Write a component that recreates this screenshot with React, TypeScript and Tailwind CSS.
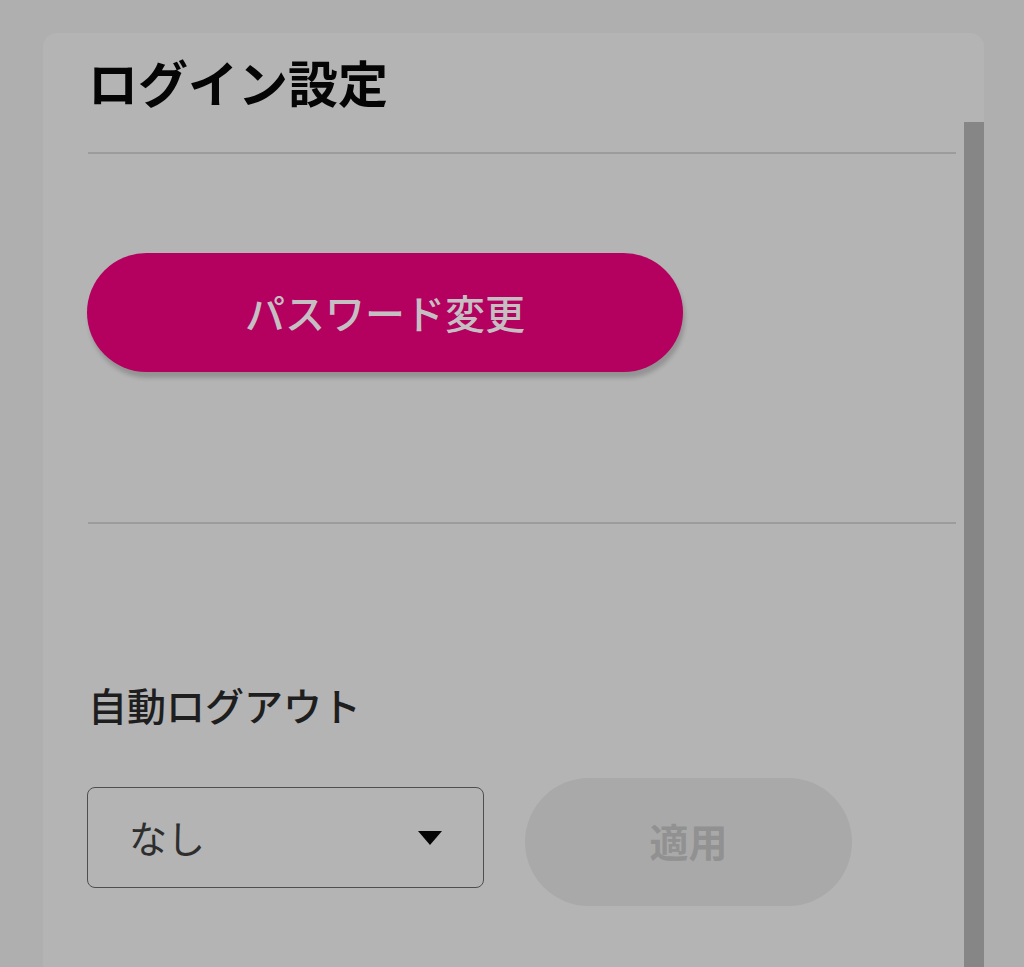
import React from "react";

export default function App() {
  const font = { fontFamily: '"Noto Sans CJK JP", "Noto Sans", sans-serif' };
  return (
    <div
      className="h-[967px] w-[1024px] overflow-hidden bg-[#afafaf] pt-[33px] pl-[43px]"
      style={font}
    >
      <div className="flex h-[934px] w-[941px] rounded-t-[14px] bg-[#b4b4b4]">
        <div className="flex flex-1 flex-col pl-[45px] pr-[8px]">
          <div className="flex h-[119px] items-start pt-[18px]">
            <h1 className="text-[50px] font-bold leading-[60px] text-[#050505]">
              ログイン設定
            </h1>
          </div>
          <div className="h-[2px] bg-[#9c9c9c]" />
          <div className="pt-[99px]">
            <button className="ml-[-1px] flex h-[119px] w-[596px] items-center justify-center rounded-full bg-[#b4005f] pb-[2px] text-[40px] font-medium text-[#c5bfc3] shadow-[2px_6px_4px_rgba(0,0,0,0.18)]">
              パスワード変更
            </button>
          </div>
          <div className="mt-[150px] h-[2px] bg-[#9c9c9c]" />
          <div className="mt-[158px] flex h-[44px] items-center">
            <span className="text-[39px] font-medium leading-[44px] text-[#1e1e1e]">
              自動ログアウト
            </span>
          </div>
          <div className="mt-[52px] flex items-start">
            <div className="ml-[-1px] mt-[9px] flex h-[101px] w-[397px] items-center justify-between rounded-[8px] border-[1.5px] border-[#4e4e4e] pl-[41px] pr-[41px]">
              <span className="pb-[2px] text-[38px] leading-none text-[#2e2e2e]">なし</span>
              <svg width="24" height="14" viewBox="0 0 24 14">
                <polygon points="0,0 24,0 12,14" fill="#050505" />
              </svg>
            </div>
            <button className="ml-[41px] flex h-[128px] w-[327px] items-center justify-center rounded-full bg-[#a9a9a9] pb-[4px] text-[39px] font-bold text-[#919191]">
              適用
            </button>
          </div>
        </div>
        <div className="mt-[89px] w-[20px] bg-[#868686]" />
      </div>
    </div>
  );
}
